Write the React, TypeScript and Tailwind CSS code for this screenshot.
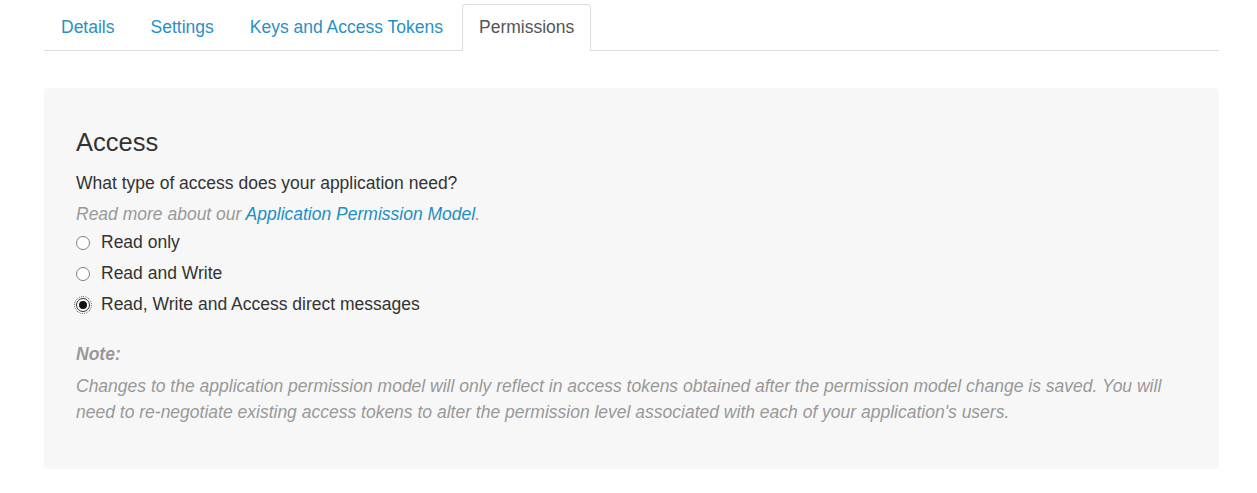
import { useState } from 'react'

const tabs = ['Details', 'Settings', 'Keys and Access Tokens', 'Permissions']

const options = [
  { id: 'read', label: 'Read only' },
  { id: 'readwrite', label: 'Read and Write' },
  { id: 'readwritedm', label: 'Read, Write and Access direct messages' },
]

function Radio({ checked, label, onSelect }: { checked: boolean; label: string; onSelect: () => void }) {
  return (
    <label className="flex items-center h-[31px] cursor-pointer" onClick={onSelect}>
      <span
        className={
          'relative w-[14px] h-[14px] rounded-full border bg-white flex items-center justify-center mr-[11px] ' +
          (checked ? 'border-[#333] outline-1 outline-dotted outline-[#555] outline-offset-1' : 'border-[#808080]')
        }
      >
        {checked && <span className="w-[8px] h-[8px] rounded-full bg-[#111]" />}
      </span>
      <span className="text-[17.5px] text-[#333]">{label}</span>
    </label>
  )
}

export default function App() {
  const [active, setActive] = useState('Permissions')
  const [access, setAccess] = useState('readwritedm')

  return (
    <div className="bg-white min-h-[493px] pl-[44px] pr-[38px] pt-[4px] text-[#333]" style={{ fontFamily: '"Liberation Sans", Arial, sans-serif' }}>
      <ul className="flex border-b border-[#ddd] leading-[25px] text-[17.5px]">
        {tabs.map((t) => {
          const on = t === active
          return (
            <li key={t} className="-mb-px mr-[2px]">
              <a
                href="#"
                onClick={(e) => {
                  e.preventDefault()
                  setActive(t)
                }}
                className={
                  'block px-[16px] py-[10px] border rounded-t-[4px] ' +
                  (on ? 'border-[#ddd] border-b-white bg-white text-[#555]' : 'border-transparent text-[#2a8fc4]')
                }
              >
                {t}
              </a>
            </li>
          )
        })}
      </ul>

      <div className="mt-[37px] bg-[#f7f7f7] rounded-[4px] px-[32px] pt-[41px] pb-[44px]">
        <h3 className="text-[25.5px] leading-[26px] text-[#333] mb-[13px]">Access</h3>
        <p className="text-[17.5px] leading-[31px]">What type of access does your application need?</p>
        <p className="text-[17.5px] leading-[31px] italic text-[#999] -mb-[3px]">
          Read more about our{' '}
          <a href="#" className="text-[#1d8ec5]">
            Application Permission Model
          </a>
          .
        </p>
        <div className="flex flex-col">
          {options.map((o) => (
            <Radio key={o.id} checked={access === o.id} label={o.label} onSelect={() => setAccess(o.id)} />
          ))}
        </div>
        <p className="mt-[19px] text-[17.5px] leading-[31px] italic font-bold text-[#999] mb-[3px]">Note:</p>
        <p className="text-[17.5px] leading-[26px] italic text-[#999]">
          Changes to the application permission model will only reflect in access tokens obtained after the permission model change is
          saved. You will need to re-negotiate existing access tokens to alter the permission level associated with each of your
          application's users.
        </p>
      </div>
    </div>
  )
}
